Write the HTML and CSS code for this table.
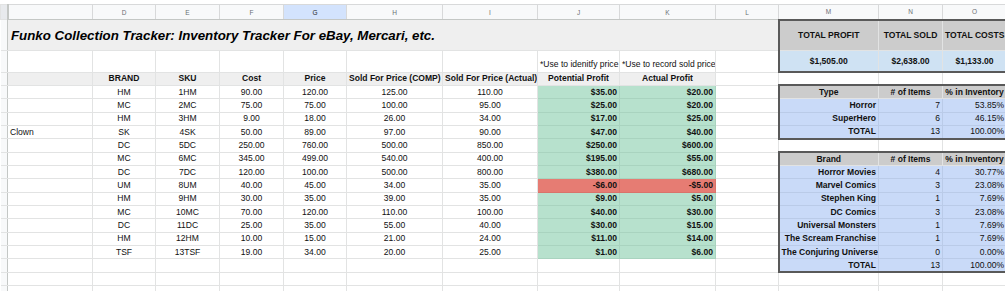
FILE: index.html
```html
<!DOCTYPE html>
<html>
<head>
<meta charset="utf-8">
<link rel="stylesheet" href="styles.css">
</head>
<body>
<table class="sheet">
  <colgroup>
    <col class="w-rh"><col class="w-c"><col class="w-d"><col class="w-e"><col class="w-f"><col class="w-g"><col class="w-h"><col class="w-i"><col class="w-j"><col class="w-k"><col class="w-l"><col class="w-m"><col class="w-n"><col class="w-o">
  </colgroup>
  <tr class="r-colhdr">
    <td class="corner"></td><td class="ch"></td><td class="ch">D</td><td class="ch">E</td><td class="ch">F</td><td class="ch sel">G</td><td class="ch">H</td><td class="ch">I</td><td class="ch">J</td><td class="ch">K</td><td class="ch">L</td><td class="ch">M</td><td class="ch">N</td><td class="ch">O</td>
  </tr>
  <tr class="r-title">
    <td class="rh"></td>
    <td class="title" colspan="10">Funko Collection Tracker: Inventory Tracker For eBay, Mercari, etc.</td>
    <td class="sum-h box-t box-l">TOTAL PROFIT</td><td class="sum-h box-t">TOTAL SOLD</td><td class="sum-h box-t">TOTAL COSTS</td>
  </tr>
  <tr class="r-note">
    <td class="rh"></td>
    <td></td><td></td><td></td><td></td><td></td><td></td><td></td>
    <td class="note">*Use to idenitfy price</td><td class="note">*Use to record sold price</td><td></td>
    <td class="sum-v box-b box-l">$1,505.00</td><td class="sum-v box-b">$2,638.00</td><td class="sum-v box-b">$1,133.00</td>
  </tr>
  <tr class="r">
    <td class="rh"></td>
    <td class="hd"></td><td class="hd">BRAND</td><td class="hd">SKU</td><td class="hd">Cost</td><td class="hd">Price</td><td class="hd">Sold For Price (COMP)</td><td class="hd">Sold For Price (Actual)</td><td class="hd">Potential Profit</td><td class="hd">Actual Profit</td><td></td>
    <td></td><td></td><td></td>
  </tr>
  <tr class="r">
    <td class="rh"></td><td></td><td class="c">HM</td><td class="c">1HM</td><td class="c">90.00</td><td class="c">120.00</td><td class="c">125.00</td><td class="c">110.00</td><td class="pos">$35.00</td><td class="pos">$20.00</td><td></td>
    <td class="tb-h box-t box-l">Type</td><td class="tb-h box-t"># of Items</td><td class="tb-h box-t">% in Inventory</td>
  </tr>
  <tr class="r">
    <td class="rh"></td><td></td><td class="c">MC</td><td class="c">2MC</td><td class="c">75.00</td><td class="c">75.00</td><td class="c">100.00</td><td class="c">95.00</td><td class="pos">$25.00</td><td class="pos">$20.00</td><td></td>
    <td class="tb-k box-l">Horror</td><td class="tb-v">7</td><td class="tb-v">53.85%</td>
  </tr>
  <tr class="r">
    <td class="rh"></td><td></td><td class="c">HM</td><td class="c">3HM</td><td class="c">9.00</td><td class="c">18.00</td><td class="c">26.00</td><td class="c">34.00</td><td class="pos">$17.00</td><td class="pos">$25.00</td><td></td>
    <td class="tb-k box-l">SuperHero</td><td class="tb-v">6</td><td class="tb-v">46.15%</td>
  </tr>
  <tr class="r">
    <td class="rh"></td><td class="l">Clown</td><td class="c">SK</td><td class="c">4SK</td><td class="c">50.00</td><td class="c">89.00</td><td class="c">97.00</td><td class="c">90.00</td><td class="pos">$47.00</td><td class="pos">$40.00</td><td></td>
    <td class="tb-k box-l box-b">TOTAL</td><td class="tb-v box-b">13</td><td class="tb-v box-b">100.00%</td>
  </tr>
  <tr class="r">
    <td class="rh"></td><td></td><td class="c">DC</td><td class="c">5DC</td><td class="c">250.00</td><td class="c">760.00</td><td class="c">500.00</td><td class="c">850.00</td><td class="pos">$250.00</td><td class="pos">$600.00</td><td></td>
    <td></td><td></td><td></td>
  </tr>
  <tr class="r">
    <td class="rh"></td><td></td><td class="c">MC</td><td class="c">6MC</td><td class="c">345.00</td><td class="c">499.00</td><td class="c">540.00</td><td class="c">400.00</td><td class="pos">$195.00</td><td class="pos">$55.00</td><td></td>
    <td class="tb-h box-t box-l">Brand</td><td class="tb-h box-t"># of Items</td><td class="tb-h box-t">% in Inventory</td>
  </tr>
  <tr class="r">
    <td class="rh"></td><td></td><td class="c">DC</td><td class="c">7DC</td><td class="c">120.00</td><td class="c">100.00</td><td class="c">500.00</td><td class="c">800.00</td><td class="pos">$380.00</td><td class="pos">$680.00</td><td></td>
    <td class="tb-k box-l">Horror Movies</td><td class="tb-v">4</td><td class="tb-v">30.77%</td>
  </tr>
  <tr class="r">
    <td class="rh"></td><td></td><td class="c">UM</td><td class="c">8UM</td><td class="c">40.00</td><td class="c">45.00</td><td class="c">34.00</td><td class="c">35.00</td><td class="neg">-$6.00</td><td class="neg">-$5.00</td><td></td>
    <td class="tb-k box-l">Marvel Comics</td><td class="tb-v">3</td><td class="tb-v">23.08%</td>
  </tr>
  <tr class="r">
    <td class="rh"></td><td></td><td class="c">HM</td><td class="c">9HM</td><td class="c">30.00</td><td class="c">35.00</td><td class="c">39.00</td><td class="c">35.00</td><td class="pos">$9.00</td><td class="pos">$5.00</td><td></td>
    <td class="tb-k box-l">Stephen King</td><td class="tb-v">1</td><td class="tb-v">7.69%</td>
  </tr>
  <tr class="r">
    <td class="rh"></td><td></td><td class="c">MC</td><td class="c">10MC</td><td class="c">70.00</td><td class="c">120.00</td><td class="c">110.00</td><td class="c">100.00</td><td class="pos">$40.00</td><td class="pos">$30.00</td><td></td>
    <td class="tb-k box-l">DC Comics</td><td class="tb-v">3</td><td class="tb-v">23.08%</td>
  </tr>
  <tr class="r">
    <td class="rh"></td><td></td><td class="c">DC</td><td class="c">11DC</td><td class="c">25.00</td><td class="c">35.00</td><td class="c">55.00</td><td class="c">40.00</td><td class="pos">$30.00</td><td class="pos">$15.00</td><td></td>
    <td class="tb-k box-l">Universal Monsters</td><td class="tb-v">1</td><td class="tb-v">7.69%</td>
  </tr>
  <tr class="r">
    <td class="rh"></td><td></td><td class="c">HM</td><td class="c">12HM</td><td class="c">10.00</td><td class="c">15.00</td><td class="c">21.00</td><td class="c">24.00</td><td class="pos">$11.00</td><td class="pos">$14.00</td><td></td>
    <td class="tb-k box-l">The Scream Franchise</td><td class="tb-v">1</td><td class="tb-v">7.69%</td>
  </tr>
  <tr class="r">
    <td class="rh"></td><td></td><td class="c">TSF</td><td class="c">13TSF</td><td class="c">19.00</td><td class="c">34.00</td><td class="c">20.00</td><td class="c">25.00</td><td class="pos">$1.00</td><td class="pos">$6.00</td><td></td>
    <td class="tb-k box-l">The Conjuring Universe</td><td class="tb-v">0</td><td class="tb-v">0.00%</td>
  </tr>
  <tr class="r">
    <td class="rh"></td><td></td><td></td><td></td><td></td><td></td><td></td><td></td><td></td><td></td><td></td>
    <td class="tb-k box-l box-b">TOTAL</td><td class="tb-v box-b">13</td><td class="tb-v box-b">100.00%</td>
  </tr>
  <tr class="r">
    <td class="rh"></td><td></td><td></td><td></td><td></td><td></td><td></td><td></td><td></td><td></td><td></td><td></td><td></td><td></td>
  </tr>
  <tr class="r">
    <td class="rh"></td><td></td><td></td><td></td><td></td><td></td><td></td><td></td><td></td><td></td><td></td><td></td><td></td><td></td>
  </tr>
</table>
</body>
</html>
```
FILE: styles.css
```css
html, body {
  margin: 0;
  background: #ffffff;
  overflow: hidden;
}
body {
  padding-top: 4px;
  font-family: "Liberation Sans", Arial, sans-serif;
  font-size: 8.55px;
  color: #111;
}
.sheet {
  border-collapse: collapse;
  table-layout: fixed;
  width: 1006px;
}
.w-rh { width: 7px; }
.w-c { width: 85px; }
.w-d { width: 63px; }
.w-e { width: 64px; }
.w-f { width: 64px; }
.w-g { width: 63px; }
.w-h { width: 96px; }
.w-i { width: 95px; }
.w-j { width: 82px; }
.w-k { width: 96px; }
.w-l { width: 63px; }
.w-m { width: 100px; }
.w-n { width: 64px; }
.w-o { width: 64px; }

.sheet td {
  border: 1px solid #e2e3e3;
  padding: 0 2px;
  white-space: nowrap;
  overflow: hidden;
  line-height: 9px;
  vertical-align: middle;
}
.r-colhdr { height: 15px; }
.r-title { height: 31.33px; }
.r-note { height: 21.33px; }
.r { height: 13.33px; }

.corner {
  background: #e8eaed;
  border-right: 2px solid #c4c7c5 !important;
}
.sheet .ch {
  background: #f8f9fa;
  color: #6b6f73;
  font-size: 6.5px;
  text-align: center;
  border-color: #d8d9da;
  border-bottom-color: #c4c7c5;
}
.sheet .ch.sel {
  background: #d3e3fd;
  color: #1f1f1f;
}
.sheet .rh {
  background: #f8f9fa;
  border-right-color: #c4c7c5;
  border-left: none;
  padding: 0;
}
.title {
  background: #efefef;
  font-weight: bold;
  font-style: italic;
  font-size: 13.3px;
  line-height: 15px !important;
  padding-left: 3px !important;
  color: #000;
}
.sum-h {
  background: #cccccc;
  font-weight: bold;
  text-align: center;
}
.sum-v {
  background: #cfe2f3;
  font-weight: bold;
  text-align: center;
}
.note {
  vertical-align: bottom !important;
  padding-bottom: 3px !important;
}
.hd {
  background: #efefef;
  font-weight: bold;
  text-align: center;
}
.c { text-align: center; }
.l { text-align: left; }
.pos, .neg {
  font-weight: bold;
  text-align: right;
}
.sheet .pos {
  background: #b7e1cd;
  border-color: #a9d3bf;
}
.sheet .neg {
  background: #e67c73;
  border-color: #d9736b;
}
.tb-h {
  background: #cccccc;
  font-weight: bold;
  text-align: center;
}
.sheet .tb-k, .sheet .tb-v {
  background: #c9daf8;
  border-color: #bacbe8;
  text-align: right;
}
.tb-k { font-weight: bold; }
.sheet .box-t { border-top: 2px solid #595959; }
.sheet .box-b { border-bottom: 2px solid #595959; }
.sheet .box-l { border-left: 2px solid #595959; }
```
